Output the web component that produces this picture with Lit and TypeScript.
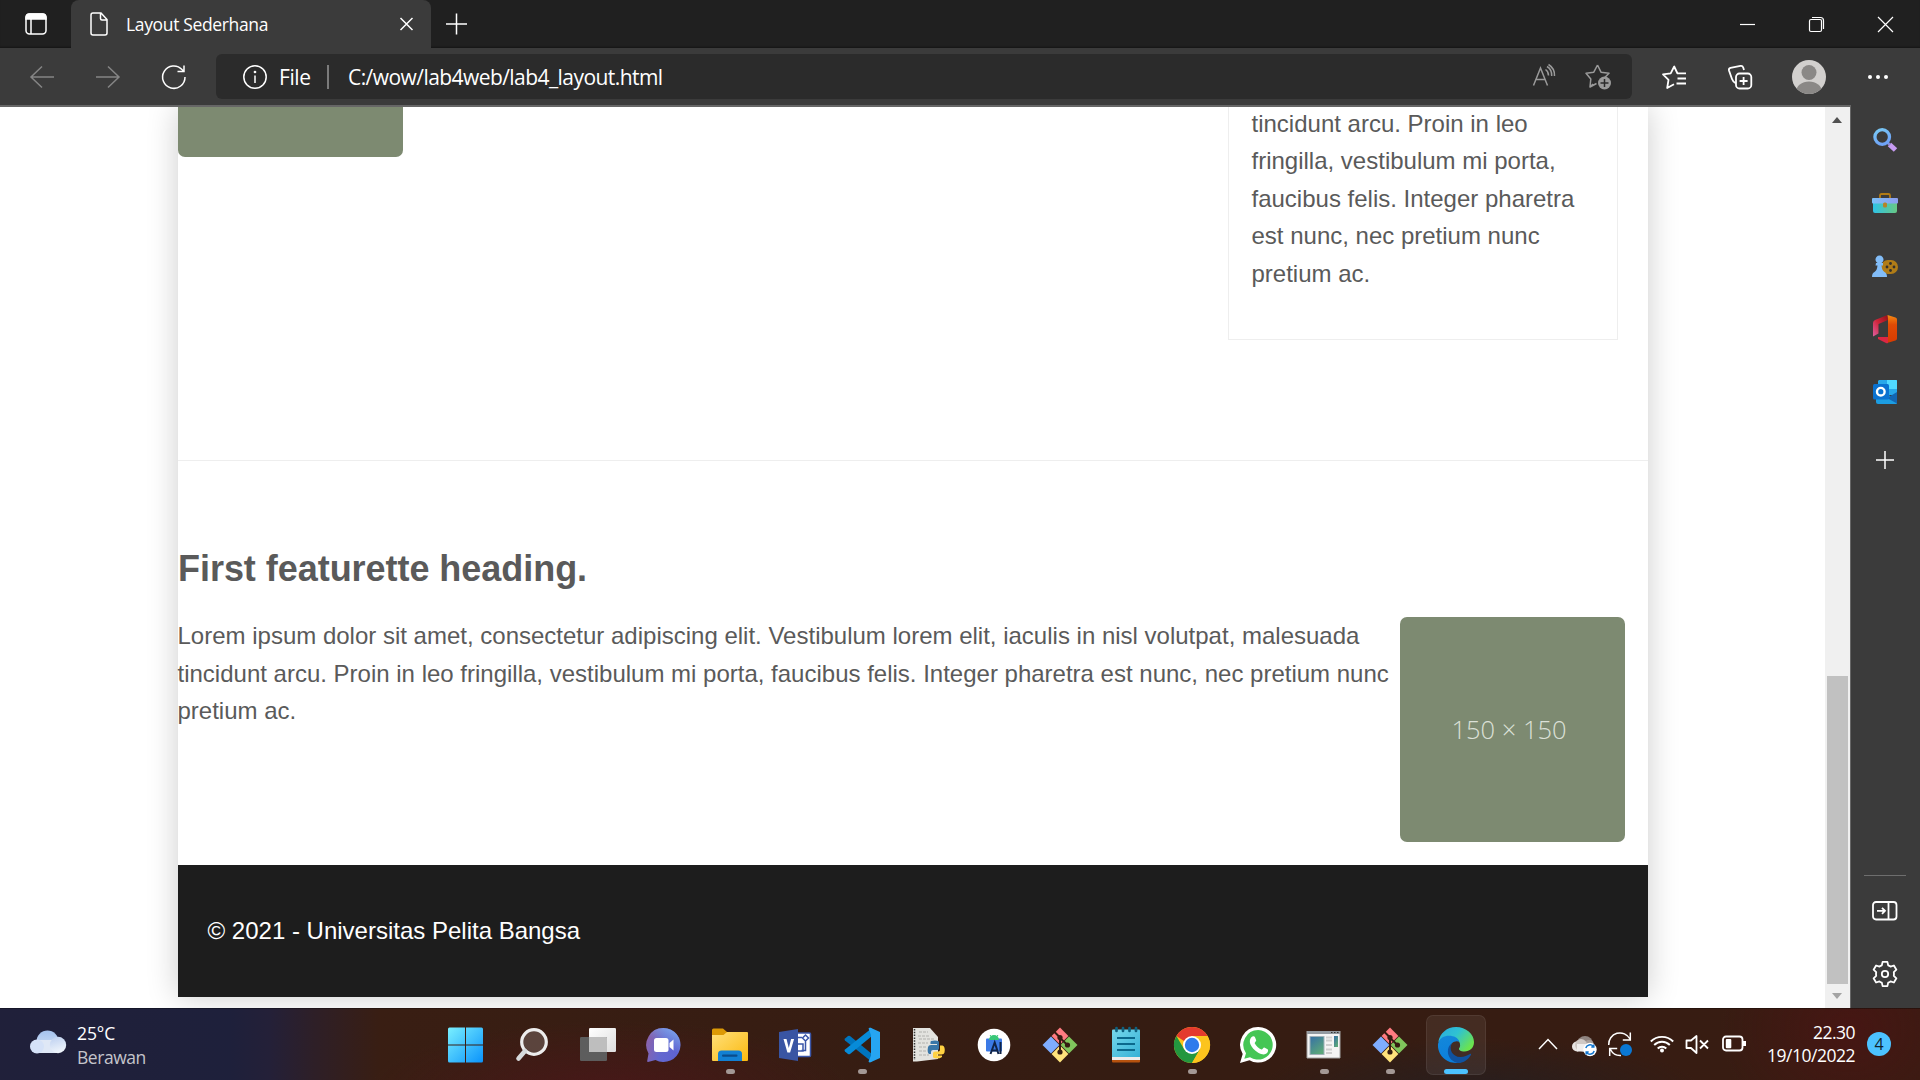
import { LitElement, html, css, svg } from "lit";
import { customElement } from "lit/decorators.js";

const icon = (w: number, h: number, body: unknown, cls = "line") =>
  html`<svg class=${cls} width=${w} height=${h} viewBox="0 0 ${w} ${h}">${body}</svg>`;

/* ---------- shared icon drawings ---------- */
const git = svg`
  <path d="M18 .5 26.4 9 18 17.400 9.600 9z" fill="#ff7b80"/>
  <path d="M27 9.600 35.500 18 27 26.400 18.600 18z" fill="#80c55c"/>
  <path d="M9 9.600 17.400 18 9 26.400.5 18z" fill="#7fadff"/>
  <path d="M18 18.600 26.400 27 18 35.500 9.600 27z" fill="#ffe37c"/>
  <path d="M12.500 5 18 10.500V26M18 11l7.500 7" stroke="#341c12" stroke-width="2" fill="none"/>
  <circle cx="18" cy="10.500" r="2.600" fill="#341c12"/><circle cx="18" cy="25" r="2.600" fill="#341c12"/><circle cx="25.500" cy="18" r="2.600" fill="#341c12"/>`;

const startIcon = svg`<defs><linearGradient id="g" x1="0" y1="0" x2="1" y2="1"><stop stop-color="#7af0ff"/><stop offset="1" stop-color="#0a93fb"/></linearGradient></defs>
  <path fill="url(#g)" d="M1.500.5H17v17H0V2Q0 .5 1.500.5zM18 .5h15.500Q35 .5 35 2v15.500H18zM0 18.500h17v17H1.500Q0 35.500 0 34zM18 18.500h17V34q0 1.500-1.500 1.500H18z"/>`;
const searchIcon = svg`<circle cx="20" cy="15" r="12.300" fill="#5b443d" stroke="#ededed" stroke-width="3.200"/><path d="M11 24 4.500 31.500" stroke="#d7dadc" stroke-width="4.600" stroke-linecap="round"/>`;
const taskView = svg`<defs><linearGradient id="tv" x2="1" y2="1"><stop stop-color="#fff"/><stop offset="1" stop-color="#dedede"/></linearGradient></defs>
  <rect x="9" y="1" width="27" height="24" rx="1.200" fill="url(#tv)"/><rect x="0" y="10" width="27" height="24" rx="1.200" fill="#5d5d5d"/><path d="M9 10h17q1 0 1 1v14H9z" fill="#bebebe"/>`;
const chat = svg`<defs><linearGradient id="ch" x1="0" y1=".3" x2="1" y2=".6"><stop stop-color="#8d62a8"/><stop offset=".5" stop-color="#6468cf"/><stop offset="1" stop-color="#5d63d2"/></linearGradient><linearGradient id="ch2" x1=".2" y1="1" x2=".8" y2="0"><stop offset=".5" stop-color="#77a0e8" stop-opacity="0"/><stop offset="1" stop-color="#7ea6ec"/></linearGradient></defs>
  <path d="M17.500 1a17 17 0 1 1-8 32L2 35q-1 0-.8-1l1.300-7.500A17 17 0 0 1 17.500 1z" fill="url(#ch)"/><path d="M17.500 1a17 17 0 1 1-8 32l-7-6.500A17 17 0 0 1 17.500 1z" fill="url(#ch2)"/>
  <rect x="8" y="11" width="14.500" height="14" rx="2.500" fill="#fff"/><path d="m23.500 16 4-3.500v11l-4-3.500z" fill="#fff"/>`;
const explorer = svg`<defs><linearGradient id="ex" x2="1" y2="1"><stop stop-color="#ffe07a"/><stop offset="1" stop-color="#fbb90f"/></linearGradient></defs>
  <path d="M0 3q0-1.500 1.500-1.500h9.500L15 5v5H0z" fill="#dc9a06"/><path d="M0 8h11.500l3.500-3h20q1 0 1 1v27q0 1-1 1H1q-1 0-1-1z" fill="url(#ex)"/>
  <path d="M6 34V27q0-3.500 3.500-3.500h17Q30 23.500 30 27v7z" fill="#1280d3"/><rect x="10" y="27.500" width="15.500" height="2.200" rx="1" fill="#0a4c8c"/>`;
const visio = svg`<rect x="17" y="6" width="15.500" height="23.500" rx="1" fill="#fff" stroke="#3a56a8" stroke-width="1.500"/><path d="M19.500 10.500H24M20 17h5v7h-5M27.500 14v9.500h-4M27.500 8l3 3-3 3-3-3z" fill="none" stroke="#3a56a8" stroke-width="1.500"/>
  <path d="M1 5 20 2v32L1 31z" fill="#3955a3"/><path d="M5.500 12h3l2.300 9 2.300-9h3l-4 13.500H9.400z" fill="#fff"/>`;
const vscode = svg`<path d="M1 11.500 4 9q1-.6 2 0L28 27v8L1 13.500q-1-1 0-2z" fill="#0074bd"/><path d="M1 24.500 4 27q1 .6 2 0L28 9V1L1 22.500q-1 1 0 2z" fill="#078bd8"/><path d="M26 .5 36 5v26l-10 4.500q-1-.2-1.500-1l2.500-6V8l-2.500-6.500z" fill="#26a5f2"/>`;
const pythonDoc = svg`<path d="M3 1h17l8 9v22l-21 2.500H3z" fill="#e3e3df"/><path d="M4.500 2v31" stroke="#333" stroke-width="1.500" stroke-dasharray="1.500 1.300"/><path d="M9 5h9M8 9h12M9 12h15M8 16h10M9 20h7M9 24h8M9 28h10" stroke="#b1b1ad" stroke-dasharray="3 1"/>
  <path d="M21 14q5-1.200 8 .5v7q0 1.500-2 1.500h-4q-2 0-2 2v2h-2q-2-1.500-1-7 .5-2 3-2h6v-1h-6.500v-2z" fill="#3876a8"/><path d="M30 18.500h2.500q3 1 2 7-.5 2-3 2H27v1h5v1.500q-4 2.800-9 .5v-4q0-2 2-2h3.500q1.500 0 1.500-2z" fill="#ffd242"/>`;
const android = svg`<circle cx="18" cy="18" r="16.300" fill="#fff"/><rect x="10" y="11.500" width="16" height="13" rx="1" fill="#3b7ae6"/><path d="M13 13a5 5 0 0 1 10 0z" fill="#38c878"/><path d="m14 8 1.500 2M22 8l-1.500 2" stroke="#38c878"/>
  <path d="m14.500 27 4.200-11.500L22.500 27M15.500 23.500h5.500M24.500 15v12" stroke="#102448" stroke-width="2" fill="none"/>`;
const notepad = svg`<defs><linearGradient id="np" x2="1" y2="1"><stop stop-color="#76d8eb"/><stop offset="1" stop-color="#35b1d6"/></linearGradient></defs>
  <rect x="4" y="29" width="28" height="6.500" rx="1" fill="#b7520e"/><rect x="4" y="4" width="28" height="29" fill="#ecebea"/><path d="M5 2.500h26q1 0 1 1V30H4V3.500q0-1 1-1z" fill="url(#np)"/>
  <path d="M9 11h18M9 17h18M9 23h18" stroke="#0b698c" stroke-width="2"/><path d="M8.500 1v3M15 1v3M21.500 1v3M28 1v3" stroke="#0e6180" stroke-width="2.700" stroke-linecap="round"/>`;
const chrome = svg`<circle cx="18" cy="18" r="18" fill="#fcc41d"/><path d="M2.400 9A18 18 0 0 1 33.600 9L18 9.200 10 14z" fill="#e43a2e"/><path d="M2.400 9A18 18 0 0 0 18 36l8-13.500-15.500.2z" fill="#23973f"/><path d="M18 9h15.600A18 18 0 0 1 18 36l7.800-13.500z" fill="#fcc41d"/>
  <circle cx="18" cy="18" r="9" fill="#fff"/><circle cx="18" cy="18" r="7.200" fill="#2f7bec"/>`;
const whatsapp = svg`<path d="M18.200 0A17.800 17.800 0 1 1 9.500 33.200L0 36l2.700-9A17.800 17.800 0 0 1 18.200 0z" fill="#fff"/><path d="M18.200 3A14.800 14.800 0 1 1 10 30.300L4.300 31.800 6 26.200A14.800 14.800 0 0 1 18.200 3z" fill="#45c655"/>
  <path d="M12.500 9.500c1-.5 2-.3 2.400.6l1.300 3.200c.3.900-1.800 2.400-1.500 3 1.500 3 3.800 5 6.800 6.200.8.300 2-2.200 2.800-1.900l3.300 1.600c.9.500.5 3-.8 4.100-2 1.700-5 1.300-8.600-.6-4-2.200-6.500-5.200-7.800-8.400-1.200-3.200-.4-6.600 2.100-7.800z" fill="#fff"/>`;
const appWin = svg`<rect x="1" y="4" width="33" height="27" fill="#f4f4f4"/><path d="M1 4h33v3H1z" fill="#939aa1"/><path d="M25 5.500h8" stroke="#333" stroke-dasharray="1.500 1.500"/><defs><linearGradient id="aw" x2=".6" y2="1"><stop stop-color="#366fa6"/><stop offset="1" stop-color="#5ba77a"/></linearGradient></defs>
  <rect x="4" y="9.500" width="14" height="18" fill="url(#aw)" stroke="#9fb0b8"/><path d="M20 10.500h6M20 13.500h6M20 18h6M20 22.500h6M20 26h6" stroke="#cfcfcf" stroke-width="2"/><rect x="28" y="9" width="4" height="11" fill="url(#aw)"/><path d="M1 4v27h33V4" fill="none" stroke="#a4a4a4"/>`;
const edge = svg`<defs><linearGradient id="e1" x2="1" y2=".6"><stop stop-color="#2aa9e0"/><stop offset=".5" stop-color="#2fc2d2"/><stop offset="1" stop-color="#6be34f"/></linearGradient><linearGradient id="e2" x2=".3" y2="1"><stop stop-color="#1488da"/><stop offset="1" stop-color="#0b7fdc"/></linearGradient></defs>
  <path d="M.3 15C2 6 9 0 18 0c10 0 18 7 18 15 0 6-4.500 9.500-9.500 9.500-4 0-6-1.500-5.500-3 1.500-2 1.500-4.500 0-7C16 8 6 8 .3 15z" fill="url(#e1)"/>
  <path d="M0 17C1.500 11 6 8.800 11 8.800c5 0 9 2 10.500 6-4-2-9.500 1-10 6.500-.5 6 4 13 12 13.700C12 39-1 30 0 17z" fill="url(#e2)"/>
  <path d="M14 16.500c-3.500 5 0 13.500 8.500 13.500 4 0 7-1.500 9.500-3 .8-.4 1.300.2.900.9C30 33 25 36 19.500 36 13 34.500 9 28.500 10 22.500c.5-3 2-5 4-6z" fill="#10529f"/>`;

const apps: Array<[unknown, string]> = [
  [startIcon, ""], [searchIcon, ""], [taskView, ""], [chat, ""], [explorer, "run"], [visio, ""],
  [vscode, "run"], [pythonDoc, ""], [android, ""], [git, ""], [notepad, ""], [chrome, "run"],
  [whatsapp, ""], [appWin, "run"], [git, "run"], [edge, "active"],
];

/* ---------- browser sidebar ---------- */
const sideTop = [
  icon(26, 26, svg`<defs><linearGradient id="s1" x2=".4" y2="1"><stop stop-color="#79c9f5"/><stop offset="1" stop-color="#6fa4f8"/></linearGradient></defs><path d="m17.500 17.500 6 5.500" stroke="#c79bf2" stroke-width="5"/><path d="m15 15 3 3" stroke="#8b8bd8" stroke-width="2.500"/><circle cx="10.200" cy="10" r="7.300" fill="none" stroke="url(#s1)" stroke-width="3.300"/>`, ""),
  icon(26, 22, svg`<defs><linearGradient id="s2" x2="1"><stop stop-color="#2fc3e6"/><stop offset="1" stop-color="#68c884"/></linearGradient><linearGradient id="s2b" x2="1"><stop stop-color="#7cc0f8"/><stop offset="1" stop-color="#8d9df0"/></linearGradient></defs><path d="M8 7V3.500Q8 2 9.500 2h7Q18 2 18 3.500V7" fill="none" stroke="#b27b15" stroke-width="1.800"/><path d="M1 10h24v9q0 2-2 2H3q-2 0-2-2z" fill="url(#s2)"/><rect y="6" width="26" height="5.500" rx="1" fill="url(#s2b)"/><rect x="11" y="10.500" width="4" height="5" rx="1.500" fill="#b58428"/>`, ""),
  icon(26, 22, svg`<rect x="9" y="5" width="17" height="14" rx="7" fill="#b07c17"/><g fill="#33302d"><circle cx="18.500" cy="8.500" r="1.400"/><circle cx="18.500" cy="15.500" r="1.400"/><circle cx="15" cy="12" r="1.400"/><circle cx="22" cy="12" r="1.400"/></g><path d="M4 8h1.500a4 4 0 1 1 4 0H11v2.500H9.500q.5 5 3 6.500 2.500 1 2.500 5H0q0-4 2.500-5 2.500-1.500 3-6.500H3.500z" fill="#82bdf8"/>`, ""),
  icon(26, 30, svg`<defs><linearGradient id="o1" x2="0" y2="1"><stop stop-color="#f58a12"/><stop offset=".35" stop-color="#e04a05"/><stop offset="1" stop-color="#d83b01"/></linearGradient><linearGradient id="o2" x1="1" x2="0" y2="1"><stop stop-color="#8f1016"/><stop offset=".5" stop-color="#d0253a"/><stop offset="1" stop-color="#de5fa0"/></linearGradient></defs><path d="M15.500 1 3 6q-2 1-2 3v13.500l5.500-3V10L16 6z" fill="url(#o2)"/><path d="m15.500 1 8 2.500Q25 4 25 5.500v19q0 1.500-1.500 2L15 29l1-4V5z" fill="url(#o1)"/><path d="M6 23h10v6q-1 .5-2 0l-8-4z" fill="#dc2743"/>`, ""),
  icon(26, 26, svg`<path d="M7 1h17q1 0 1 1v14H6V2z" fill="#28a8ea"/><path d="M15 1h9q1 0 1 1v8H15z" fill="#50d9ff"/><path d="M4 14h10l11 8v2q0 1-1 1H6q-2 0-2-2z" fill="#1c9de2"/><path d="m25 13-10 6 10 5.500z" fill="#1366b3"/><rect x="1" y="5" width="16" height="15.500" rx="1.500" fill="#0a72d0"/><circle cx="8.800" cy="12.700" r="3.800" fill="none" stroke="#fff" stroke-width="2.400"/>`, ""),
];
const panelIcon = icon(26, 20, svg`<rect x="1" y="1" width="23.500" height="17.500" rx="3"/><path d="M16.500 1v17.500M5 9.800h8M10 6.800l3 3-3 3"/>`, "line bold");
const gearIcon = icon(28, 28, svg`<path d="M11.600 1.900h4.800l.8 3.500q1.200.4 2.300 1.200l3.400-1.100 2.500 4.200-2.600 2.500q.4 1.800 0 3.600l2.600 2.500-2.500 4.200-3.400-1.100q-1.100.8-2.300 1.200l-.8 3.500h-4.800l-.8-3.500q-1.200-.4-2.300-1.200l-3.400 1.100-2.500-4.200 2.600-2.500q-.4-1.800 0-3.600L2.600 9.700l2.500-4.200 3.400 1.100q1.100-.8 2.300-1.200z" stroke-linejoin="round"/><circle cx="14" cy="14" r="3.200"/>`, "line bold");

const LOREM = "tincidunt arcu. Proin in leo fringilla, vestibulum mi porta, faucibus felis. Integer pharetra est nunc, nec pretium nunc pretium ac.";

@customElement("app-root")
export class AppRoot extends LitElement {
  static styles = css`
    :host { display: block; width: 1920px; height: 1080px; }
    * { box-sizing: border-box; }
    svg { display: block; flex: none; overflow: visible; }
    .line { fill: none; stroke: #fff; stroke-width: 1.5; }
    .bold { stroke-width: 1.8; }
    .thin { stroke-width: 1.2; }
    .dim { stroke: #858585; }
    .soft { stroke: #9a9a9a; }
    .screen { width: 1920px; height: 1080px; display: grid; grid-template-rows: 48px 57px 903px 72px; overflow: hidden; background: #3b3b3b; font-family: "Open Sans", "Noto Sans", sans-serif; color: #fff; }
    .cell { display: flex; align-items: center; justify-content: center; flex: none; height: 100%; }
    .tabs { display: flex; background: #202020; box-shadow: inset 0 -2px 2px -1px #151515; }
    .c72 { width: 71px; padding-left: 1px; }
    .tab { width: 360px; height: 48px; display: flex; align-items: center; padding: 0 18px 0 19px; background: #3b3b3b; border-radius: 8px 8px 0 0; }
    .title { flex: 1; margin-left: 18px; font-size: 17.5px; letter-spacing: -.35px; white-space: nowrap; line-height: 24px; }
    .new { width: 52px; }
    .fill { flex: 1; }
    .c69 { width: 69px; }
    .c66 { width: 66px; }
    .c72b { width: 71px; }
    .dots { padding-left: 2px; }
    .toolbar { display: flex; align-items: center; padding-left: 9px; background: #3b3b3b; }
    .address { width: 1416px; height: 45px; margin: 0 9px; display: flex; align-items: center; background: #2b2b2b; border-radius: 6px; padding: 0 21px 0 27px; font-size: 21px; line-height: 28px; white-space: nowrap; }
    .scheme { width: 48px; margin-left: 12px; letter-spacing: -.4px; }
    .sep { width: 2px; height: 24px; background: #7b7b7b; margin-right: 19px; }
    .url { flex: 1; letter-spacing: -.56px; }
    .addr-icons { display: flex; gap: 29px; }
    .body { display: grid; grid-template-columns: 1851px 69px; min-height: 0; }
    .viewport { display: grid; grid-template-columns: 1825px 25px; border-top: 2px solid #666; border-right: 1px solid #666; background: #fff; height: 903px; overflow: hidden; }
    .doc { background: #fff; padding: 0 177px 0 178px; overflow: hidden; font-family: "Liberation Sans", Arial, sans-serif; font-size: 24px; line-height: 37.5px; color: #5a5a5a; height: 901px; }
    .container { height: 890px; display: flex; flex-direction: column; background: #fff; box-shadow: 0 0 30px rgba(0,0,0,.2); }
    .upper { height: 354px; display: flex; justify-content: space-between; align-items: flex-start; padding-right: 30px; border-bottom: 1px solid #eee; }
    .thumb-end { width: 225px; height: 50px; background: #7d8a71; border-radius: 0 0 7px 7px; }
    .widget { width: 390px; height: 233px; border: 1px solid #eee; border-top: 0; padding: 0 22px 0 22.5px; }
    .widget p { margin: -2.5px 0 0; }
    .feature { flex: 1; display: grid; grid-template-columns: 1222px 225px; grid-template-rows: 156px 225px; }
    .feature h2 { grid-column: 1 / 3; margin: 89px 0 0; font-size: 36px; line-height: 37.5px; letter-spacing: -.04px; }
    .feature p { margin: 0 0 0 -.5px; }
    .thumb { height: 225px; display: flex; align-items: center; justify-content: center; background: #7d8a71; border-radius: 7px; color: #dbe0d7; font: 300 25.5px/34px "Open Sans", "Noto Sans", sans-serif; padding: 0 7px 2px 0; }
    .footer { height: 132px; background: #1d1d1d; color: #fff; padding: 46.5px 29.5px; }
    .scroll { background: #f0f0f0; display: flex; flex-direction: column; align-items: center; padding: 10px 1px 10px 0; }
    .thumbbar { width: 21px; height: 308px; margin-top: 553px; background: #c1c1c1; }
    .up, .down { width: 0; height: 0; border: 5.5px solid transparent; }
    .up { border-top: 0; border-bottom: 6px solid #505050; }
    .down { border-bottom: 0; border-top: 6px solid #a3a3a3; margin-top: 9px; }
    .side { display: flex; flex-direction: column; align-items: center; padding: 3.500px 1px 2.500px 0; height: 903px; }
    .slot { height: 63px; display: flex; align-items: center; flex: none; }
    .plus { padding-top: 10px; }
    .rule { width: 42px; height: 1px; background: #6e6e6e; margin-bottom: 4px; }
    .taskbar { display: flex; background:
        radial-gradient(ellipse 240px 70px at 610px 82px, rgba(82,20,28,.6), transparent),
        radial-gradient(ellipse 130px 110px at 1850px 20px, rgba(84,16,20,.5), transparent),
        radial-gradient(ellipse 220px 50px at 1480px 80px, rgba(36,31,33,.8), transparent),
        linear-gradient(90deg, #20203a 0, #1e203b 230px, #242038 270px, #2e1f27 315px, #391e13 380px, #351c12 1100px, #381c12 1920px); border-top: 1px solid rgba(0,0,0,.3); }
    .weather { width: 433px; display: flex; align-items: center; padding-left: 29.5px; gap: 11.5px; font-size: 17.5px; line-height: 24px; padding-bottom: 2px; }
    .weather svg { margin-top: -3px; }
    .temp { letter-spacing: -.1px; padding-top: 3px; }
    .sub { color: #c5c5cb; letter-spacing: -.45px; }
    .app { width: 66px; height: 71px; display: flex; flex-direction: column; align-items: center; padding-top: 18px; flex: none; }
    .app.active { width: 60px; height: 60px; margin: 6px 3px 0; padding-top: 12px; border-radius: 7px; background: rgba(255,255,255,.07); box-shadow: inset 0 0 0 1px rgba(255,255,255,.07); }
    .run::after { content: ""; width: 9px; height: 5px; border-radius: 3px; background: #a39895; margin-top: 6px; }
    .active::after { content: ""; width: 24px; height: 5px; flex: none; border-radius: 3px; background: #4cc2ff; margin-top: 6px; }
    .tray { flex: 1; display: flex; padding: 23px 0 0 50px; }
    .g1 { margin-right: 15px; } .g2 { margin-right: 11px; } .g3 { margin-right: 18px; }
    .g4 { margin-right: 13px; }
    .clock { width: 108px; text-align: right; font-size: 17.5px; line-height: 23px; margin-top: -11px; letter-spacing: -.5px; }
    .badge { width: 24px; height: 24px; border-radius: 50%; background: #4cc2ff; color: #10222c; font-size: 16px; line-height: 24px; text-align: center; margin: 0 0 0 12px; }
  `;

  render() {
    return html`
      <div class="screen">
        <div class="tabs">
          <div class="cell c72">${icon(22, 22, svg`<rect x="1" y="1" width="20" height="20" rx="3.500"/><path d="M1 6V4.500Q1 1 4.500 1h13Q21 1 21 4.500V6z" fill="#fff"/><path d="M6 6v15"/>`)}</div>
          <div class="tab">
            ${icon(18, 24, svg`<path d="M3 1h8l6 6.500V21q0 2-2 2H3q-2 0-2-2V3q0-2 2-2zM10.500 1v5.500q0 1.500 1.500 1.500h5"/>`)}
            <span class="title">Layout Sederhana</span>
            ${icon(13, 12, svg`<path d="m.5 0 12 12M12.500 0l-12 12"/>`)}
          </div>
          <div class="cell new">${icon(22, 22, svg`<path d="M10.500 .5v21M0 11h21"/>`)}</div>
          <div class="fill"></div>
          <div class="cell c69">${icon(15, 15, svg`<path d="M0 7.500h15"/>`, "line thin")}</div>
          <div class="cell c69">${icon(15, 15, svg`<rect x=".5" y="2.500" width="12" height="12" rx="1.500"/><path d="M3 .5h8.500q3 0 3 3V12"/>`, "line thin")}</div>
          <div class="cell c69">${icon(15, 15, svg`<path d="m0 0 15 15M15 0 0 15"/>`, "line thin")}</div>
        </div>
        <div class="toolbar">
          <div class="cell c66">${icon(24, 22, svg`<path d="M24 11H1M12 .5 1 11l11 10.500"/>`, "line dim")}</div>
          <div class="cell c66">${icon(24, 22, svg`<path d="M0 11h23M12 .5 23 11 12 21.500"/>`, "line dim")}</div>
          <div class="cell c66">${icon(24, 24, svg`<path d="M23 12A11.200 11.200 0 1 1 20 4.500l2 2M22 .5v6h-6.500"/>`)}</div>
          <div class="address">
            ${icon(24, 24, svg`<circle cx="12" cy="12" r="11.200"/><path d="M12 10.500V18"/><circle cx="12" cy="7" r=".6"/>`)}
            <span class="scheme">File</span><span class="sep"></span>
            <span class="url">C:/wow/lab4web/lab4_layout.html</span>
            <div class="addr-icons">
              ${icon(24, 24, svg`<path d="M1.500 21.500 8.500 4l7 17.500M4 15.500h9M13.500 5.500q3 2 3 6M15 2.500q5 3 4.700 9.500M16.500.5q6.500 4 6 11.500"/>`, "line soft")}
              ${icon(26, 26, svg`<path d="m12.500 1 3.500 7.200 8 1.100-4 4M8 20l-3 3 .8-8L1 9.300l7.800-1.100L12.500 1M5 23l6.500-3.500" stroke-linejoin="round"/><circle cx="19.500" cy="19" r="6.500" fill="#9a9a9a" stroke="none"/><path d="M19.500 15v8M15.500 19h8" stroke="#2b2b2b"/>`, "line soft")}
            </div>
          </div>
          <div class="cell c66">${icon(24, 24, svg`<path d="M15.500 8.500 12.200 1.500 8.700 8.300 1 9.400l5.500 5.500L5.200 23l6.800-3.800M15 8.300h9M15.500 13.500H24M14.500 18.500H24" stroke-linejoin="round"/>`, "line bold")}</div>
          <div class="cell c66">${icon(24, 24, svg`<rect x="8" y="8.500" width="15.300" height="15" rx="3.500"/><path d="M15.600 12v8M11.600 16h8M8 18.500q-3-1.500-4-4.500L1 5.500q-.5-2 1.500-2.600L12.500.9q2-.4 2.700 1.600l.8 2.500"/>`, "line bold")}</div>
          <div class="cell c72b">${icon(34, 34, svg`<defs><clipPath id="av"><circle cx="17" cy="17" r="17"/></clipPath></defs><g clip-path="url(#av)" stroke="none"><rect width="34" height="34" fill="#d2d0ce"/><circle cx="17" cy="12.500" r="7.500" fill="#8a8886"/><ellipse cx="17" cy="32" rx="13" ry="10.500" fill="#8a8886"/></g>`)}</div>
          <div class="cell c66 dots">${icon(20, 4, svg`<g fill="#fff" stroke="none"><circle cx="2" cy="2" r="2"/><circle cx="10" cy="2" r="2"/><circle cx="18" cy="2" r="2"/></g>`)}</div>
        </div>
        <div class="body">
          <div class="viewport">
            <div class="doc">
              <div class="container">
                <div class="upper">
                  <div class="thumb-end"></div>
                  <div class="widget"><p>${LOREM}</p></div>
                </div>
                <div class="feature">
                  <h2>First featurette heading.</h2>
                  <p>Lorem ipsum dolor sit amet, consectetur adipiscing elit. Vestibulum lorem elit, iaculis in nisl volutpat, malesuada ${LOREM}</p>
                  <div class="thumb">150 × 150</div>
                </div>
                <div class="footer">© 2021 - Universitas Pelita Bangsa</div>
              </div>
            </div>
            <div class="scroll"><div class="up"></div><div class="thumbbar"></div><div class="down"></div></div>
          </div>
          <div class="side">
            ${sideTop.map((i) => html`<div class="slot">${i}</div>`)}
            <div class="slot plus">${icon(18, 18, svg`<path d="M9 0v18M0 9h18"/>`)}</div>
            <div class="fill"></div>
            <div class="rule"></div>
            <div class="slot">${panelIcon}</div>
            <div class="slot">${gearIcon}</div>
          </div>
        </div>
        <div class="taskbar">
          <div class="weather">
            ${icon(36, 24, svg`<defs><linearGradient id="w1" x2="0" y2="1"><stop stop-color="#a5c3ee"/><stop offset="1" stop-color="#d5e2f6"/></linearGradient><linearGradient id="w2" x2=".3" y2="1"><stop stop-color="#bccff0"/><stop offset="1" stop-color="#eef4fb"/></linearGradient></defs><circle cx="17.500" cy="11.500" r="11" fill="url(#w1)"/><path d="M7 10h22v13H7z" fill="#dfe8f6"/><circle cx="7" cy="16.500" r="7" fill="#d5e2f8"/><circle cx="28" cy="15" r="8.200" fill="url(#w2)"/>`, "")}
            <div><div class="temp">25°C</div><div class="sub">Berawan</div></div>
          </div>
          ${apps.map(([i, c]) => html`<div class="app ${c}">${icon(36, 36, i, "")}</div>`)}
          <div class="tray">
            <div class="g1">${icon(18, 24, svg`<path d="m0 17 9-9.500L18 17"/>`)}</div>
            <div class="g2">${icon(25, 24, svg`<g stroke="none"><circle cx="13" cy="12" r="8" fill="#8f8480"/><circle cx="17" cy="13" r="5" fill="#a79e9a"/><circle cx="5" cy="14.500" r="5" fill="#e8e4e2"/><circle cx="9" cy="13" r="6" fill="#cfc8c4"/><path d="M5 12h10v7.500H5z" fill="#efedec"/><circle cx="18" cy="17.500" r="6.700" fill="#fff"/></g><path d="M13.800 16a4.400 4.400 0 0 1 7.500-1.700M22.200 19a4.400 4.400 0 0 1-7.500 1.700M21.800 12.500v2.500h-2.500M14.200 22.500V20h2.500" stroke="#1276cf"/>`)}</div>
            <div class="g3">${icon(24, 24, svg`<path d="M.7 13A11.300 11.300 0 0 1 22 7M22.300.5V8h-7.500M1.700 24v-7.500h7.500M2.500 17.500A11 11 0 0 0 13 23.500"/><circle cx="18" cy="18" r="6" fill="#0a78d4" stroke="none"/>`)}</div>
            <div class="g2">${icon(24, 24, svg`<path d="M.8 9.500a15.800 15.800 0 0 1 22.400 0M4.200 13a11 11 0 0 1 15.600 0M7.700 16.500a6 6 0 0 1 8.600 0" stroke-width="1.900"/><circle cx="12" cy="18.500" r="2" fill="#fff" stroke="none"/>`)}</div>
            <div class="g4">${icon(24, 24, svg`<path d="M1.500 8.500H6L11.500 4v17L6 16H1.500zM15 8.500l8 8M23 8.500l-8 8" stroke-linejoin="round"/>`, "line bold")}</div>
            ${icon(25, 24, svg`<rect x="1" y="4.500" width="19.500" height="14" rx="3"/><rect x="3.800" y="7" width="5.500" height="9.200" rx="1" fill="#fff" stroke="none"/><path d="M22.500 9v5" stroke-width="3"/>`, "line bold")}
            <div class="clock"><div>22.30</div><div>19/10/2022</div></div>
            <div class="badge">4</div>
          </div>
        </div>
      </div>`;
  }
}
